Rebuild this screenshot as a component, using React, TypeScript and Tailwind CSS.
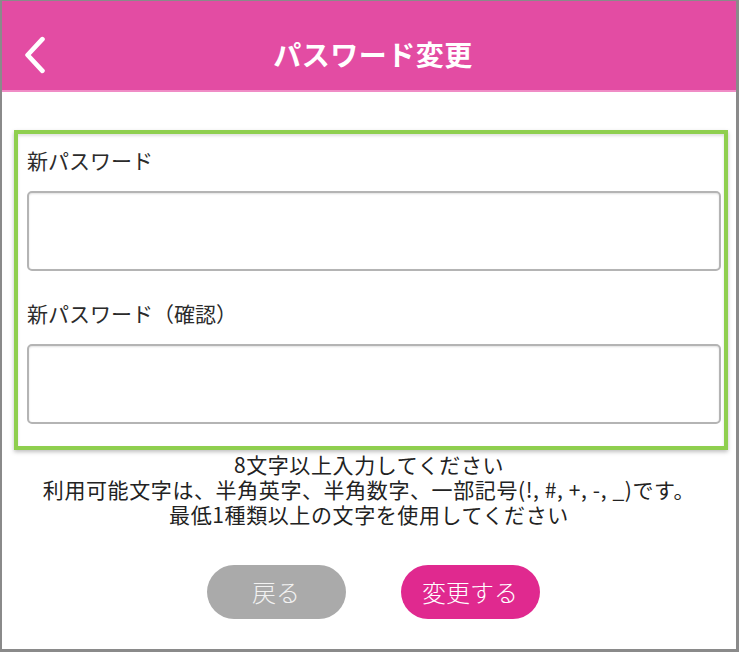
import React from 'react';

const jp = { fontFamily: '"Noto Sans CJK JP", "Noto Sans", sans-serif' };

function PasswordField({ label, mt }: { label: string; mt: string }) {
  return (
    <div className={mt}>
      <div className="h-[30px] text-[21px] leading-[30px] text-[#2b2b2b]">{label}</div>
      <div className="mt-[16px] h-[80px] w-[694px] rounded-[5px] border-2 border-[#b4b4b4] bg-white shadow-[inset_0_1px_2px_rgba(0,0,0,0.12)]" />
    </div>
  );
}

export default function App() {
  return (
    <div
      className="flex h-[652px] w-[739px] flex-col border border-l-2 border-r-[3px] border-b-[3px] border-[#8a8a8a] bg-white"
      style={jp}
    >
      {/* header */}
      <div className="relative flex h-[91px] shrink-0 items-center justify-center border-b-2 border-[#f08cc6] bg-[#e34ca3] pl-[8px] pt-[16px]">
        <svg
          viewBox="0 0 24 36"
          className="absolute left-[20px] top-[35px] h-[38px] w-[26px]"
          fill="none"
          stroke="white"
          strokeWidth="4.5"
          strokeLinecap="round"
          strokeLinejoin="round"
        >
          <path d="M19 3L5 18l14 15" />
        </svg>
        <h1 className="text-[28px] font-bold tracking-[0.5px] text-white">パスワード変更</h1>
      </div>

      {/* highlighted form */}
      <div className="ml-[12px] mt-[38px] w-[714px] border-4 border-[#8fcf4f] bg-white pb-[22px] pl-[9px] pr-[1px] pt-[11px] shadow-[0_2px_4px_rgba(0,0,0,0.25),inset_0_2px_3px_rgba(0,0,0,0.12)]">
        <PasswordField label="新パスワード" mt="" />
        <PasswordField label="新パスワード（確認）" mt="mt-[27px]" />
      </div>

      {/* notes */}
      <div className="mt-[2px] text-center text-[21px] leading-[25px] tracking-[0.6px] text-[#222]">
        <p>8文字以上入力してください</p>
        <p>利用可能文字は、半角英字、半角数字、一部記号(!, #, +, -, _)です。</p>
        <p>最低1種類以上の文字を使用してください</p>
      </div>

      {/* buttons */}
      <div className="mt-[38px] flex justify-center gap-[55px] pl-[8px]">
        <button className="h-[54px] w-[139px] rounded-full bg-[#aaaaaa] text-[24px] font-light text-[#f2f2f2]">戻る</button>
        <button className="h-[54px] w-[139px] rounded-full bg-[#e0298f] text-[24px] font-light text-white">変更する</button>
      </div>
    </div>
  );
}
